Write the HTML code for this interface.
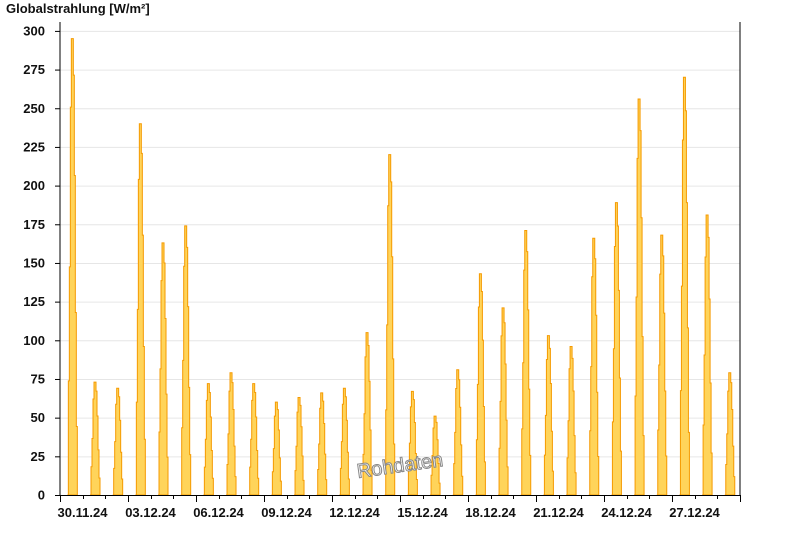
<!DOCTYPE html>
<html><head><meta charset="utf-8"><style>
body{margin:0;background:#fff;width:800px;height:550px;overflow:hidden}
svg{display:block}
text{font-family:"Liberation Sans",Arial,sans-serif;font-weight:bold;font-size:12px;fill:#111}
</style></head><body>
<svg id="s" width="800" height="550" xmlns="http://www.w3.org/2000/svg">
<text x="6" y="13" style="font-size:13px">Globalstrahlung [W/m²]</text>
<g id="grid"></g>
<g id="bars" fill="#ffd45a" stroke="#f59a00" stroke-width="1"></g>
<text x="400" y="472" transform="rotate(-8 400 466)" text-anchor="middle" style="font-size:20px;font-weight:normal;fill:#fff;stroke:#888;stroke-width:1">Rohdaten</text>
<line x1="60" y1="22" x2="60" y2="496" stroke="#000"/>
<line x1="740" y1="22" x2="740" y2="496" stroke="#000"/>
<line x1="55" y1="495.5" x2="740" y2="495.5" stroke="#000"/>
<g id="ax"></g>
</svg>
<script>
var NS="http://www.w3.org/2000/svg";
function el(t,a,p,txt){var e=document.createElementNS(NS,t);for(var k in a)e.setAttribute(k,a[k]);if(txt)e.textContent=txt;document.getElementById(p).appendChild(e);}
for(var v=0;v<=300;v+=25){var y=495-v*1.547;
 if(v>0)el('line',{x1:60,x2:740,y1:y+.5,y2:y+.5,stroke:'#e6e6e6'},'grid');
 el('line',{x1:55,x2:60,y1:y+.5,y2:y+.5,stroke:'#000'},'ax');
 el('text',{x:45,y:y+4.5,'text-anchor':'end',style:'font-size:13px'},'ax',String(v));}
var dx=22.67;
var labels=['30.11.24','03.12.24','06.12.24','09.12.24','12.12.24','15.12.24','18.12.24','21.12.24','24.12.24','27.12.24'];
for(var d=0;d<=30;d++){var x=Math.round(60+d*dx)+.5;
 el('line',{x1:x,x2:x,y1:495,y2:d%3==0?502:499,stroke:'#000'},'ax');
 if(d%3==0&&d<30)el('text',{x:x+22,y:517,'text-anchor':'middle',style:'font-size:13px'},'ax',labels[d/3]);}
var pk=[295,73,69,240,163,174,72,79,72,60,63,66,69,105,220,67,51,81,143,121,171,103,96,166,189,256,168,270,181,79];
var sh=[[-5,0],[-4,.25],[-3,.5],[-2,.85],[-1,1],[1,1],[1,.92],[2,.7],[3,.4],[4,.15],[5,0]];
pk.forEach(function(h,d){var cx=61+(d+0.5)*dx;var pts=[];
 sh.forEach(function(s,i){var y=495-h*1.547*s[1];var x=cx+s[0];
  if(i>0){pts.push(x+','+pts[pts.length-1].split(',')[1]);}pts.push(x+','+y);});
 el('polygon',{points:pts.join(' ')},'bars');});
</script>
</body></html>
